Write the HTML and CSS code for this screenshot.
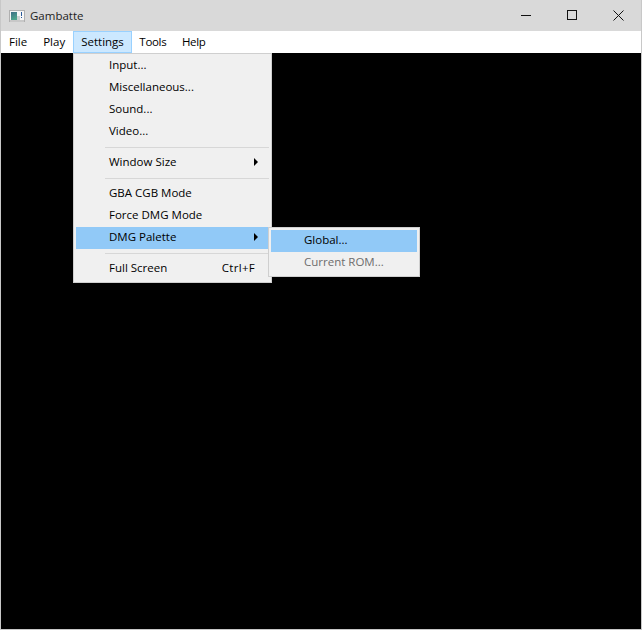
FILE: index.html
```html
<!DOCTYPE html>
<html>
<head>
<meta charset="utf-8">
<title>Gambatte</title>
<link rel="stylesheet" href="styles.css">
</head>
<body>
<div class="window">
  <header class="titlebar">
    <svg class="app-icon" width="16" height="16" viewBox="0 0 16 16">
      <defs>
        <linearGradient id="lcd" x1="0" y1="0" x2="0.4" y2="1">
          <stop offset="0" stop-color="#3d6f86"/>
          <stop offset="1" stop-color="#4fa58c"/>
        </linearGradient>
      </defs>
      <rect x="0.5" y="2.5" width="15" height="11" fill="#f6f6f6" stroke="#b0b0b0"/>
      <rect x="1" y="12" width="14" height="2" fill="#c8c8c8"/>
      <rect x="2" y="4" width="6" height="8" fill="url(#lcd)"/>
      <rect x="8" y="8" width="3" height="4" fill="#ccd2d2"/>
      <rect x="12" y="4" width="1" height="4" fill="#2a5a9a"/>
      <rect x="12" y="9" width="1" height="1" fill="#2a5a9a"/>
    </svg>
    <span class="title">Gambatte</span>
    <div class="controls">
      <button class="ctl"><svg width="11" height="11" viewBox="0 0 11 11"><path d="M0 5.5H10" stroke="#111" fill="none"/></svg></button>
      <button class="ctl"><svg width="11" height="11" viewBox="0 0 11 11"><rect x="0.5" y="0.5" width="9" height="9" stroke="#111" fill="none"/></svg></button>
      <button class="ctl"><svg width="11" height="11" viewBox="0 0 11 11"><path d="M0.5 0.5L10.5 10.5M10.5 0.5L0.5 10.5" stroke="#111" fill="none"/></svg></button>
    </div>
  </header>
  <nav class="menubar">
    <span class="top">File</span>
    <span class="top">Play</span>
    <span class="top open">Settings</span>
    <span class="top tight">Tools</span>
    <span class="top tight">Help</span>
  </nav>
  <main class="screen"></main>
</div>

<div class="menu settings">
  <div class="item">Input...</div>
  <div class="item">Miscellaneous...</div>
  <div class="item">Sound...</div>
  <div class="item">Video...</div>
  <div class="sep"></div>
  <div class="item"><span>Window Size</span><i class="arrow"></i></div>
  <div class="sep"></div>
  <div class="item">GBA CGB Mode</div>
  <div class="item">Force DMG Mode</div>
  <div class="item hot"><span>DMG Palette</span><i class="arrow"></i></div>
  <div class="sep"></div>
  <div class="item"><span>Full Screen</span><span class="key">Ctrl+F</span></div>
</div>

<div class="menu palette">
  <div class="item hot">Global...</div>
  <div class="item off">Current ROM...</div>
</div>
</body>
</html>
```
FILE: styles.css
```css
* { box-sizing: border-box; }
html, body { margin: 0; height: 100%; background: #fff; }
body {
  font-family: "Open Sans", "Noto Sans", sans-serif;
  font-size: 11.5px;
  color: #000;
  overflow: hidden;
}
.window {
  width: 642px;
  height: 630px;
  display: flex;
  flex-direction: column;
  background: #d9d9d9;
  border: solid #c8c8c8;
  border-width: 0 1px 1px;
}
.titlebar {
  height: 31px;
  display: flex;
  align-items: center;
  padding-left: 8px;
  background: #d9d9d9;
}
.app-icon { flex: none; }
.title { margin-left: 5px; color: #222; }
.controls { margin-left: auto; display: flex; }
.ctl {
  width: 46px;
  height: 31px;
  padding: 0;
  border: 0;
  background: none;
  display: flex;
  align-items: center;
  justify-content: center;
}
.menubar {
  height: 22px;
  display: flex;
  background: #fff;
}
.top {
  height: 22px;
  padding: 0 7px;
  line-height: 19px;
  border: 1px solid transparent;
}
.top.tight { letter-spacing: -0.3px; padding-left: 6.5px; }
.top.open { background: #cce8ff; border-color: #99d1ff; }
.screen { flex: 1; background: #000; }
.menu {
  position: absolute;
  background: #f0f0f0;
  border: 1px solid #cfcfcf;
  padding: 1px 2px;
}
.settings { left: 73px; top: 53px; width: 199px; height: 230px; }
.palette { left: 268px; top: 227px; width: 152px; height: 50px; padding-top: 2px; }
.item {
  height: 22px;
  padding: 0 9px 2px 33px;
  line-height: 20px;
  display: flex;
  justify-content: space-between;
  align-items: center;
  position: relative;
  color: #000;
}
.hot { background: #91c9f7; }
.off { color: #6d6d6d; }
.key { margin-right: 5px; letter-spacing: 0.3px; }
.arrow {
  width: 0;
  height: 0;
  margin-right: 2px;
  border-style: solid;
  border-width: 4px 0 4px 4px;
  border-color: transparent transparent transparent #000;
}
.sep {
  height: 9px;
  padding-top: 4px;
  margin-left: 29px;
}
.sep::before {
  content: "";
  display: block;
  height: 1px;
  background: #d7d7d7;
}
```
